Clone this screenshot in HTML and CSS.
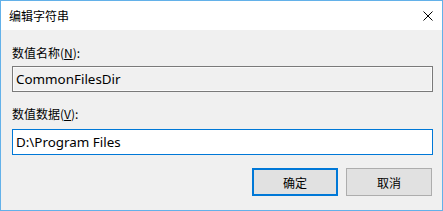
FILE: index.html
```html
<!DOCTYPE html>
<html lang="zh-CN">
<head>
  <meta charset="UTF-8">
  <link rel="stylesheet" href="styles.css">
  <title>编辑字符串</title>
</head>
<body>
  <div class="dialog">
    <div class="titlebar">
      <span class="title">编辑字符串</span>
      <svg class="close" width="10" height="10" viewBox="0 0 10 10">
        <path d="M0.5 0.5 L9.5 9.5 M9.5 0.5 L0.5 9.5" stroke="#000" stroke-width="1" fill="none"/>
      </svg>
    </div>
    <div class="content">
      <label class="field-label" for="valueName">数值名称(<u>N</u>):</label>
      <input class="field readonly" id="valueName" type="text" value="CommonFilesDir" readonly>
      <label class="field-label second" for="valueData">数值数据(<u>V</u>):</label>
      <input class="field active" id="valueData" type="text" value="D:\Program Files">
      <div class="buttons">
        <button class="btn default">确定</button>
        <button class="btn">取消</button>
      </div>
    </div>
  </div>
</body>
</html>
```

FILE: styles.css
```css
* {
  margin: 0;
  padding: 0;
  box-sizing: border-box;
}
body {
  width: 443px;
  height: 211px;
  font-family: "Noto Sans", "Noto Sans CJK SC", sans-serif;
  font-size: 12px;
  color: #000;
}
.dialog {
  width: 443px;
  height: 211px;
  border: 1px solid #63b1e9;
  display: flex;
  flex-direction: column;
  background: #f0f0f0;
}
.titlebar {
  height: 29px;
  background: #fff;
  display: flex;
  align-items: center;
  justify-content: space-between;
  padding: 0 9px 0 8px;
}
.title {
  font-family: "Noto Sans CJK SC", sans-serif;
  font-size: 12px;
  color: #000;
}
.close {
  display: block;
}
.content {
  flex: 1;
  display: flex;
  flex-direction: column;
  padding: 15px 9px 0 11px;
}
.field-label {
  font-family: "Noto Sans CJK SC", sans-serif;
  line-height: 16px;
  height: 16px;
}
.field-label.second {
  margin-top: 14px;
}
.field {
  display: block;
  width: 100%;
  height: 26px;
  margin-top: 5px;
  font-family: "Noto Sans", "Noto Sans CJK SC", sans-serif;
  font-size: 13.4px;
  padding: 0 0 0 3px;
  outline: none;
  color: #000;
}
.field.readonly {
  background: #f0f0f0;
  border: 1px solid #7a7a7a;
  box-shadow: inset 0 0 0 1px #fafafa;
}
.field.active {
  background: #fff;
  border: 1px solid #0078d7;
  margin-top: 7px;
  height: 26px;
}
.buttons {
  display: flex;
  justify-content: flex-end;
  gap: 8px;
  margin-top: 13px;
  padding-right: 1px;
}
.btn {
  width: 86px;
  height: 28px;
  background: #e1e1e1;
  border: 1px solid #adadad;
  font-family: "Noto Sans CJK SC", sans-serif;
  font-size: 12px;
  color: #000;
}
.btn.default {
  border: 2px solid #0078d7;
}
```
